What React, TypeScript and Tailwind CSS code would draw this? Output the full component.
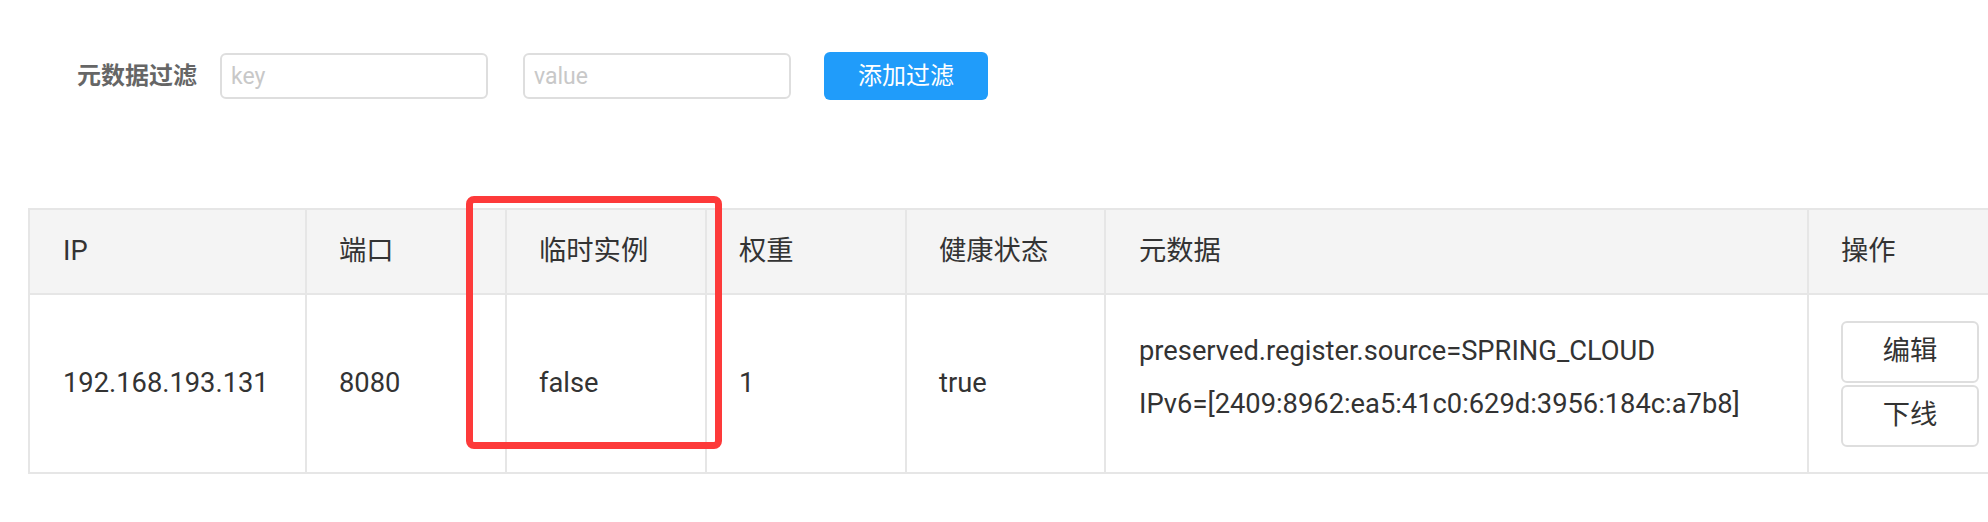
import React from "react";

const font = { fontFamily: 'Roboto, "Noto Sans CJK SC", sans-serif' };

export default function App() {
  return (
    <div
      className="relative w-[1988px] h-[522px] overflow-hidden bg-white text-[#333]"
      style={font}
    >
      {/* filter row */}
      <div className="flex items-center pt-[52px] pl-[77px] h-[100px]">
        <span className="text-[24px] font-bold text-[#666] leading-none w-[143px] whitespace-nowrap">
          元数据过滤
        </span>
        <input
          placeholder="key"
          className="w-[268px] h-[46px] border-2 border-[#dedede] rounded-[6px] pl-[9px] text-[23px] outline-none placeholder:text-[#c8c8c8]"
        />
        <input
          placeholder="value"
          className="ml-[35px] w-[268px] h-[46px] border-2 border-[#dedede] rounded-[6px] pl-[9px] text-[23px] outline-none placeholder:text-[#c8c8c8]"
        />
        <button className="ml-[33px] w-[164px] h-[48px] rounded-[6px] bg-[#209cfa] text-white text-[24px] leading-none">
          添加过滤
        </button>
      </div>

      {/* table */}
      <div className="mt-[108px] ml-[28px] w-[2000px] border-t-2 border-b-2 border-[#e6e6e6] text-[27.3px]">
        <div className="flex h-[85px] bg-[#f4f4f4] border-b-2 border-[#e6e6e6]">
          <div className="w-[277px] border-l-2 border-[#e6e6e6] flex items-center pl-[33px]">IP</div>
          <div className="w-[200px] border-l-2 border-[#e6e6e6] flex items-center pl-[32px]">端口</div>
          <div className="w-[200px] border-l-2 border-[#e6e6e6] flex items-center pl-[32px]">临时实例</div>
          <div className="w-[200px] border-l-2 border-[#e6e6e6] flex items-center pl-[32px]">权重</div>
          <div className="w-[199px] border-l-2 border-[#e6e6e6] flex items-center pl-[32px]">健康状态</div>
          <div className="w-[703px] border-l-2 border-[#e6e6e6] flex items-center pl-[33px]">元数据</div>
          <div className="w-[221px] border-l-2 border-[#e6e6e6] flex items-center pl-[32px]">操作</div>
        </div>
        <div className="flex h-[177px]">
          <div className="w-[277px] border-l-2 border-[#e6e6e6] flex items-center pl-[33px]">192.168.193.131</div>
          <div className="w-[200px] border-l-2 border-[#e6e6e6] flex items-center pl-[32px]">8080</div>
          <div className="w-[200px] border-l-2 border-[#e6e6e6] flex items-center pl-[32px]">false</div>
          <div className="w-[200px] border-l-2 border-[#e6e6e6] flex items-center pl-[32px]">1</div>
          <div className="w-[199px] border-l-2 border-[#e6e6e6] flex items-center pl-[32px]">true</div>
          <div className="w-[703px] border-l-2 border-[#e6e6e6] flex items-center pl-[33px]">
            <div className="pb-[12px] leading-[53px]">
              <div>preserved.register.source=SPRING_CLOUD</div>
              <div>IPv6=[2409:8962:ea5:41c0:629d:3956:184c:a7b8]</div>
            </div>
          </div>
          <div className="w-[221px] border-l-2 border-[#e6e6e6] flex flex-col justify-center gap-[2px] pl-[32px]">
            <button className="w-[138px] h-[62px] border-2 border-[#dedede] rounded-[6px] bg-white text-[27.3px]">编辑</button>
            <button className="w-[138px] h-[62px] border-2 border-[#dedede] rounded-[6px] bg-white text-[27.3px]">下线</button>
          </div>
        </div>
      </div>

      {/* red annotation box */}
      <div className="absolute left-[466px] top-[196px] w-[256px] h-[253px] border-[7px] border-[#fd3a3a] rounded-[8px]" />
    </div>
  );
}
